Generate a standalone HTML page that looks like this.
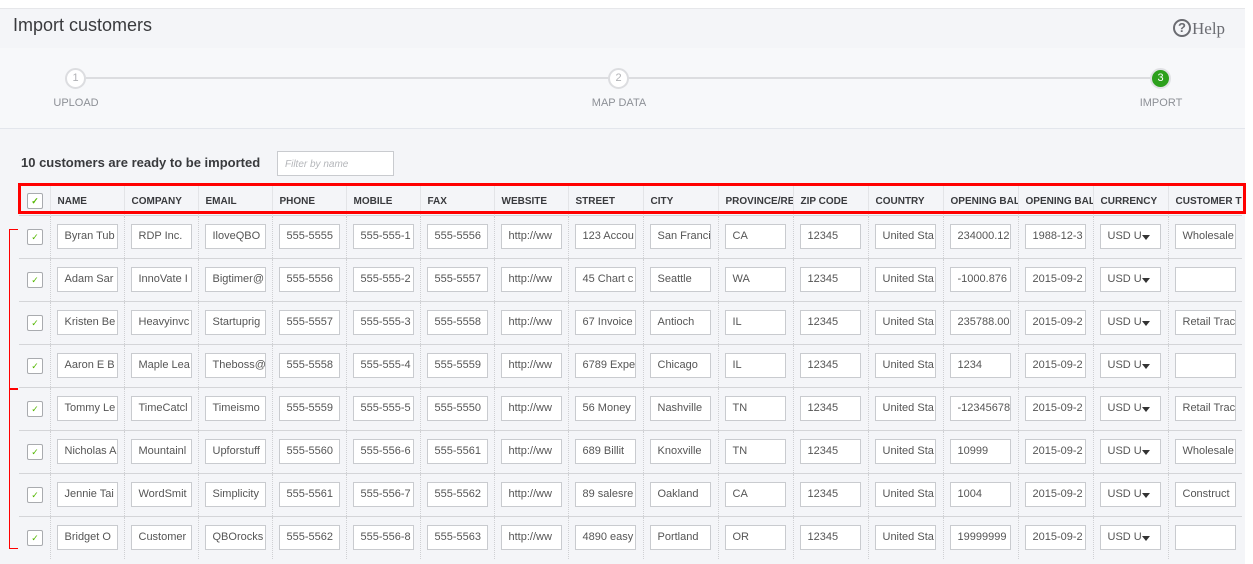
<!DOCTYPE html>
<html><head><meta charset="utf-8"><style>
*{box-sizing:border-box;margin:0;padding:0}
html,body{width:1253px;height:564px;overflow:hidden}
body{background:#fff;font-family:"Liberation Sans",sans-serif;color:#393a3d;position:relative}
.hdr{position:absolute;left:0;top:8px;width:1245px;height:40px;background:#f4f5f8;border-top:1px solid #e6e7ea}
.title{position:absolute;left:13px;top:6px;font-size:18px;color:#393a3d}
.help{position:absolute;left:1173px;top:10px;font-family:"Liberation Serif",serif;font-size:17px;color:#6b6c72}
.help span{display:inline-block;width:18px;height:18px;border:2px solid #6b6c72;border-radius:50%;font-size:13px;text-align:center;line-height:14px;font-weight:bold;font-family:"Liberation Sans",sans-serif;vertical-align:2px;margin-right:1px}
.step{position:absolute;left:0;top:48px;width:1245px;height:81px;background:#f7f8fa;border-bottom:1px solid #e3e6ec}
.line{position:absolute;left:86px;top:29px;width:1075px;height:2px;background:#dcdde0}
.c{position:absolute;top:20px;width:21px;height:21px;border-radius:50%;border:2px solid #dcdde0;background:#fff;color:#b0b1b5;font-size:11px;text-align:center;line-height:17px}
.lab{position:absolute;top:49px;font-size:11px;color:#8d9096;transform:translateX(-50%)}
.main{position:absolute;left:0;top:129px;width:1245px;height:435px;background:#f4f5f8}
.cnt{position:absolute;left:21px;top:155px;font-size:13px;font-weight:bold;color:#393a3d}
.filter{position:absolute;left:277px;top:151px;width:117px;height:25px;border:1px solid #c9cbcf;background:#fff;font-size:10px;font-style:italic;color:#b4b6ba;padding:7px 7px}
table{position:absolute;left:19px;top:186px;border-collapse:collapse;table-layout:fixed;width:1223px}
th{height:29px;font-size:10px;font-weight:bold;text-align:left;padding-left:7px;padding-top:2px;white-space:nowrap;overflow:hidden;color:#393a3d;border-left:1px solid #e3e4e7}
td{height:43px;border-top:1px solid #d4d5d8;border-left:1px dotted #cfd0d3;padding-left:6px;overflow:hidden}
th:first-child,td:first-child{border-left:none;padding-left:8px}
.in{width:61px;height:25px;border:1px solid #c9cbcf;background:#fff;font-size:11px;color:#555;padding:0 7px;line-height:23px;white-space:nowrap;overflow:hidden}
.sel{position:relative;padding-right:22px}
.sel:after{content:"";position:absolute;right:10px;top:10px;border:4px solid transparent;border-top:5px solid #333;border-bottom:none}
.cb{width:16px;height:16px;border:1px solid #a9abaf;background:#fff;border-radius:2px;color:#53b700;font-size:9px;line-height:14px;text-align:center}
.red{position:absolute;left:18px;top:183px;width:1228px;height:31px;border:3px solid #f00}
.br{position:absolute;left:9px;width:9px;border:1px solid #f00;border-right:none}
</style></head><body>
<div class="hdr"><div class="title">Import customers</div><div class="help"><span>?</span>Help</div></div>
<div class="step"><div class="line"></div>
<div class="c" style="left:65px">1</div><div class="lab" style="left:76px">UPLOAD</div>
<div class="c" style="left:608px">2</div><div class="lab" style="left:619px">MAP DATA</div>
<div class="c" style="left:1150px;background:#2ca01c;border-color:#e0e1e4;color:#fff">3</div><div class="lab" style="left:1161px">IMPORT</div>
</div>
<div class="main"></div>
<div class="cnt">10 customers are ready to be imported</div>
<div class="filter">Filter by name</div>
<table>
<colgroup><col style="width:31px"><col style="width:74px"><col style="width:74px"><col style="width:74px"><col style="width:74px"><col style="width:74px"><col style="width:74px"><col style="width:74px"><col style="width:75px"><col style="width:75px"><col style="width:75px"><col style="width:75px"><col style="width:75px"><col style="width:75px"><col style="width:75px"><col style="width:75px"><col style="width:74px"></colgroup>
<tr><th><div class="cb">✓</div></th><th>NAME</th><th>COMPANY</th><th>EMAIL</th><th>PHONE</th><th>MOBILE</th><th>FAX</th><th>WEBSITE</th><th>STREET</th><th>CITY</th><th>PROVINCE/REGION</th><th>ZIP CODE</th><th>COUNTRY</th><th>OPENING BALANCE</th><th>OPENING BALANCE</th><th>CURRENCY</th><th>CUSTOMER TYPE</th></tr>
<tr><td><div class="cb">✓</div></td><td><div class="in">Byran Tub</div></td><td><div class="in">RDP Inc.</div></td><td><div class="in">IloveQBO</div></td><td><div class="in">555-5555</div></td><td><div class="in">555-555-1</div></td><td><div class="in">555-5556</div></td><td><div class="in">http://ww</div></td><td><div class="in">123 Accou</div></td><td><div class="in">San Franci</div></td><td><div class="in">CA</div></td><td><div class="in">12345</div></td><td><div class="in">United Sta</div></td><td><div class="in">234000.12</div></td><td><div class="in">1988-12-3</div></td><td><div class="in sel">USD U</div></td><td><div class="in">Wholesale</div></td></tr>
<tr><td><div class="cb">✓</div></td><td><div class="in">Adam Sar</div></td><td><div class="in">InnoVate I</div></td><td><div class="in">Bigtimer@</div></td><td><div class="in">555-5556</div></td><td><div class="in">555-555-2</div></td><td><div class="in">555-5557</div></td><td><div class="in">http://ww</div></td><td><div class="in">45 Chart c</div></td><td><div class="in">Seattle</div></td><td><div class="in">WA</div></td><td><div class="in">12345</div></td><td><div class="in">United Sta</div></td><td><div class="in">-1000.876</div></td><td><div class="in">2015-09-2</div></td><td><div class="in sel">USD U</div></td><td><div class="in"></div></td></tr>
<tr><td><div class="cb">✓</div></td><td><div class="in">Kristen Be</div></td><td><div class="in">Heavyinvc</div></td><td><div class="in">Startuprig</div></td><td><div class="in">555-5557</div></td><td><div class="in">555-555-3</div></td><td><div class="in">555-5558</div></td><td><div class="in">http://ww</div></td><td><div class="in">67 Invoice</div></td><td><div class="in">Antioch</div></td><td><div class="in">IL</div></td><td><div class="in">12345</div></td><td><div class="in">United Sta</div></td><td><div class="in">235788.00</div></td><td><div class="in">2015-09-2</div></td><td><div class="in sel">USD U</div></td><td><div class="in">Retail Trac</div></td></tr>
<tr><td><div class="cb">✓</div></td><td><div class="in">Aaron E B</div></td><td><div class="in">Maple Lea</div></td><td><div class="in">Theboss@</div></td><td><div class="in">555-5558</div></td><td><div class="in">555-555-4</div></td><td><div class="in">555-5559</div></td><td><div class="in">http://ww</div></td><td><div class="in">6789 Expe</div></td><td><div class="in">Chicago</div></td><td><div class="in">IL</div></td><td><div class="in">12345</div></td><td><div class="in">United Sta</div></td><td><div class="in">1234</div></td><td><div class="in">2015-09-2</div></td><td><div class="in sel">USD U</div></td><td><div class="in"></div></td></tr>
<tr><td><div class="cb">✓</div></td><td><div class="in">Tommy Le</div></td><td><div class="in">TimeCatcl</div></td><td><div class="in">Timeismo</div></td><td><div class="in">555-5559</div></td><td><div class="in">555-555-5</div></td><td><div class="in">555-5550</div></td><td><div class="in">http://ww</div></td><td><div class="in">56 Money</div></td><td><div class="in">Nashville</div></td><td><div class="in">TN</div></td><td><div class="in">12345</div></td><td><div class="in">United Sta</div></td><td><div class="in">-12345678</div></td><td><div class="in">2015-09-2</div></td><td><div class="in sel">USD U</div></td><td><div class="in">Retail Trac</div></td></tr>
<tr><td><div class="cb">✓</div></td><td><div class="in">Nicholas A</div></td><td><div class="in">Mountainl</div></td><td><div class="in">Upforstuff</div></td><td><div class="in">555-5560</div></td><td><div class="in">555-556-6</div></td><td><div class="in">555-5561</div></td><td><div class="in">http://ww</div></td><td><div class="in">689 Billit</div></td><td><div class="in">Knoxville</div></td><td><div class="in">TN</div></td><td><div class="in">12345</div></td><td><div class="in">United Sta</div></td><td><div class="in">10999</div></td><td><div class="in">2015-09-2</div></td><td><div class="in sel">USD U</div></td><td><div class="in">Wholesale</div></td></tr>
<tr><td><div class="cb">✓</div></td><td><div class="in">Jennie Tai</div></td><td><div class="in">WordSmit</div></td><td><div class="in">Simplicity</div></td><td><div class="in">555-5561</div></td><td><div class="in">555-556-7</div></td><td><div class="in">555-5562</div></td><td><div class="in">http://ww</div></td><td><div class="in">89 salesre</div></td><td><div class="in">Oakland</div></td><td><div class="in">CA</div></td><td><div class="in">12345</div></td><td><div class="in">United Sta</div></td><td><div class="in">1004</div></td><td><div class="in">2015-09-2</div></td><td><div class="in sel">USD U</div></td><td><div class="in">Construct</div></td></tr>
<tr><td><div class="cb">✓</div></td><td><div class="in">Bridget O</div></td><td><div class="in">Customer</div></td><td><div class="in">QBOrocks</div></td><td><div class="in">555-5562</div></td><td><div class="in">555-556-8</div></td><td><div class="in">555-5563</div></td><td><div class="in">http://ww</div></td><td><div class="in">4890 easy</div></td><td><div class="in">Portland</div></td><td><div class="in">OR</div></td><td><div class="in">12345</div></td><td><div class="in">United Sta</div></td><td><div class="in">19999999</div></td><td><div class="in">2015-09-2</div></td><td><div class="in sel">USD U</div></td><td><div class="in"></div></td></tr>
</table>
<div class="red"></div>
<div class="br" style="top:229px;height:160px"></div>
<div class="br" style="top:389px;height:160px"></div>
</body></html>
